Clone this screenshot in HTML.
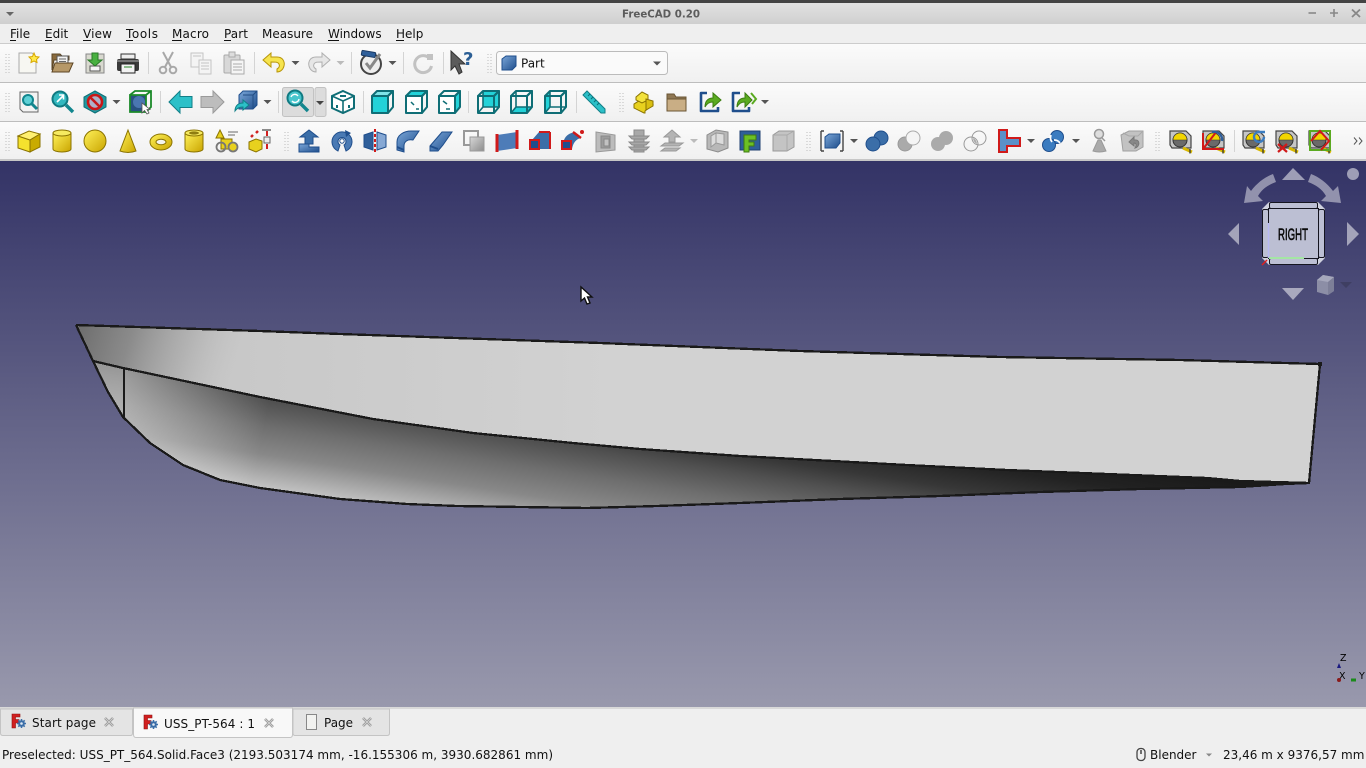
<!DOCTYPE html>
<html><head><meta charset="utf-8"><title>FreeCAD 0.20</title>
<style>html,body{margin:0;padding:0;width:1366px;height:768px;overflow:hidden;background:#efefef}svg{display:block}
text{font-family:"DejaVu Sans",sans-serif;font-size:12px;fill:#111}</style></head><body>
<svg width="1366" height="768" viewBox="0 0 1366 768" xmlns="http://www.w3.org/2000/svg">
<defs>
<linearGradient id="title" x1="0" y1="0" x2="0" y2="1"><stop offset="0" stop-color="#e2e2e2"/><stop offset="1" stop-color="#cfcfcf"/></linearGradient>
<linearGradient id="tb" x1="0" y1="0" x2="0" y2="1"><stop offset="0" stop-color="#fbfbfb"/><stop offset="1" stop-color="#f0f0f0"/></linearGradient>
<linearGradient id="vp" x1="0" y1="0" x2="0" y2="1"><stop offset="0" stop-color="#333366"/><stop offset="1" stop-color="#9999ad"/></linearGradient>
<linearGradient id="y" x1="0" y1="0" x2="1" y2="1"><stop offset="0" stop-color="#fff25a"/><stop offset="1" stop-color="#c9a400"/></linearGradient>
<linearGradient id="b" x1="0" y1="0" x2="1" y2="1"><stop offset="0" stop-color="#7aa6d8"/><stop offset="1" stop-color="#1f4e8c"/></linearGradient>
<linearGradient id="g" x1="0" y1="0" x2="1" y2="1"><stop offset="0" stop-color="#d8d8d8"/><stop offset="1" stop-color="#8c8c8c"/></linearGradient>
<linearGradient id="lower" gradientUnits="userSpaceOnUse" x1="-43.5" y1="282.6" x2="-70" y2="454.5">
<stop offset="0" stop-color="#191919"/><stop offset=".149" stop-color="#222"/><stop offset=".293" stop-color="#373737"/><stop offset=".397" stop-color="#505050"/><stop offset=".546" stop-color="#6e6e6e"/><stop offset=".707" stop-color="#888"/><stop offset=".902" stop-color="#c4c4c4"/><stop offset="1" stop-color="#cdcdcd"/></linearGradient>
<linearGradient id="upper" gradientUnits="userSpaceOnUse" x1="85" y1="325" x2="235" y2="375"><stop offset="0" stop-color="#6c6c6c" stop-opacity=".95"/><stop offset=".3" stop-color="#7c7c7c" stop-opacity=".8"/><stop offset=".65" stop-color="#999" stop-opacity=".45"/><stop offset="1" stop-color="#bbb" stop-opacity="0"/></linearGradient>
<linearGradient id="upper2" gradientUnits="userSpaceOnUse" x1="150" y1="0" x2="620" y2="0"><stop offset="0" stop-color="#c6c6c6"/><stop offset="1" stop-color="#d2d2d2"/></linearGradient>
<linearGradient id="bowov" gradientUnits="userSpaceOnUse" x1="124" y1="372" x2="270" y2="400"><stop offset="0" stop-color="#fff" stop-opacity=".45"/><stop offset="1" stop-color="#fff" stop-opacity="0"/></linearGradient>

<path id="dd" d="M-4-2H4L0 2Z" fill="#555"/>
<path id="ddg" d="M-4-2H4L0 2Z" fill="#bbb"/>
<g id="grip"><path d="M-2-9V10M1-9V10" stroke="#bdbdbd" stroke-dasharray="1 2" fill="none"/></g>
<path id="sep" d="M.5-11V11" stroke="#d4d4d4" fill="none"/>

<g id="box"><path d="M-10-6-5-11H11L6-6Z" fill="none" stroke="#0f6e76" stroke-width="2" stroke-linejoin="round"/><path d="M6-6 11-11V5L6 11ZM-10-6H6V11H-10Z" fill="none" stroke="#0f6e76" stroke-width="2" stroke-linejoin="round"/></g>
<path id="bk" d="M-5-11V5H11M-5 5-10 11" stroke="#0f6e76" stroke-width="1.600" fill="none"/>

<g id="tape"><path d="M-11-10H5L10-5V7H-9L-11 4Z" fill="#c6c6c6" stroke="#444" stroke-width="1.200"/><circle cx="-1" cy="-1" r="7" fill="#6a6a6a" stroke="#333"/><path d="M-8-1A7 7 0 0 1 6-1Z" fill="#f2d500" stroke="#333" stroke-width=".6"/><path d="M2 7 11 11" stroke="#d8b800" stroke-width="3"/><path d="M9 8V12.500" stroke="#333" stroke-width="1.300"/></g>
<g id="fc"><path d="M-7-8H1V-5H-3.500V-2.500H0V1H-3.500V6H-7Z" fill="#d11f1f" stroke="#8c1111" stroke-width=".6"/><path d="M2.500-3V6M-2 1.500H7M-.7-1.700 5.700 4.700M5.700-1.700-.7 4.700" stroke="#3b6ea8" stroke-width="1.500"/><circle cx="2.500" cy="1.500" r="3.300" fill="#3b6ea8"/><circle cx="2.500" cy="1.500" r="1.300" fill="#dfe8f2"/></g>
<g id="x"><path d="M-4-4 4 4M4-4-4 4" stroke="#9a9a9a" stroke-width="2.600"/><path d="M-4-4 4 4M4-4-4 4" stroke="#d8d8d8" stroke-width=".8"/></g>
</defs>

<!-- title bar -->
<rect width="1366" height="3" fill="#444"/>
<rect y="3" width="1366" height="21" fill="url(#title)"/>
<path d="M6 12H14L10 16Z" fill="#666"/>
<text x="622" y="17.500" textLength="78" lengthAdjust="spacingAndGlyphs" style="font-size:10.500px;font-weight:bold;fill:#5c5c5c">FreeCAD 0.20</text>
<path d="M1308.500 13H1316" stroke="#888" stroke-width="1.600"/><path d="M1330 13H1338M1334 9V17" stroke="#888" stroke-width="1.600"/><path d="M1352 9.500 1360 17M1360 9.500 1352 17" stroke="#888" stroke-width="1.800"/>

<!-- menu -->
<rect y="24" width="1366" height="19" fill="#efefef"/>
<text x="10" y="38">File</text><text x="45" y="38">Edit</text><text x="83" y="38" textLength="29">View</text><text x="126" y="38" textLength="32">Tools</text><text x="172" y="38" textLength="37">Macro</text><text x="224" y="38" textLength="24">Part</text><text x="262" y="38">Measure</text><text x="328" y="38">Windows</text><text x="396" y="38">Help</text>
<path d="M10 40.500h6M45 40.500h7M83 40.500h8M126 40.500h7M172 40.500h10M224 40.500h7M328 40.500h11M396 40.500h8" stroke="#111"/>

<!-- toolbars -->
<rect y="43" width="1366" height="1" fill="#ccc"/>
<rect y="44" width="1366" height="38" fill="url(#tb)"/><rect y="82" width="1366" height="1" fill="#bdbdbd"/>
<rect y="83" width="1366" height="38" fill="url(#tb)"/><rect y="121" width="1366" height="1" fill="#bdbdbd"/>
<rect y="122" width="1366" height="37" fill="url(#tb)"/><rect y="159" width="1366" height="2" fill="#c6c6c6"/>

<!-- row 1 -->
<use href="#grip" x="8" y="63"/>
<g transform="translate(29 63)"><path d="M-10-10H3L7-6V10H-10Z" fill="#f7f7f2" stroke="#aaa"/><path d="M5-10 6.500-6.500 10-6 7.500-3.500 8-.5 5-2 2-.5 2.500-3.500 0-6 3.500-6.500Z" fill="#ffe94a" stroke="#d8a800"/></g>
<g transform="translate(62 63)"><path d="M-10 7V-9H-2L0-7H7V-3H-8Z" fill="#8a6a3c" stroke="#5c4524"/><rect x="-5" y="-7" width="11" height="9" fill="#f2f2f2" stroke="#555"/><path d="M-3-4H4M-3-1.500H4" stroke="#666"/><path d="M-7 0H11L7 9H-10Z" fill="#b69868" stroke="#5c4524"/></g>
<g transform="translate(95 63)"><path d="M-9-9H9V10H-9Z" fill="#d9d9d0" stroke="#888"/><rect x="-5" y="3" width="10" height="5" fill="#f5f5f5" stroke="#555"/><path d="M-3-10H3V-3H7L0 3-7-3H-3Z" fill="#48b040" stroke="#2a7a2a"/></g>
<g transform="translate(128 63)"><rect x="-11" y="-4" width="22" height="12" rx="2" fill="#3a3a3a"/><rect x="-7" y="-9" width="14" height="5" fill="#eee" stroke="#333"/><path d="M-7 1H7V10H-7Z" fill="#f2f2f2" stroke="#222"/><path d="M-4 4 H4" stroke="#8bb98b" stroke-width="2"/><rect x="-11" y="-3" width="22" height="2" fill="#777"/></g>
<use href="#sep" x="148" y="63"/>
<g transform="translate(168 63)" fill="none" stroke="#a8a8a8" stroke-width="2"><path d="M-5-11 3 4M5-11-3 4"/><circle cx="-5" cy="7" r="3.300"/><circle cx="5" cy="7" r="3.300"/></g>
<g transform="translate(201 63)" stroke="#c4c4c4" fill="#f4f4f4"><rect x="-10" y="-10" width="12" height="14"/><rect x="-2" y="-3" width="12" height="14"/><path d="M0 0H8M0 3H8M0 6H8M-8-7H0" fill="none"/></g>
<g transform="translate(234 63)" stroke="#aaa"><rect x="-10" y="-8" width="16" height="18" rx="1" fill="#d8d8d8"/><rect x="-5" y="-11" width="6" height="5" fill="#ddd"/><rect x="-3" y="-3" width="13" height="14" fill="#f5f5f5"/><path d="M-1 1H8M-1 4H8M-1 7H8" fill="none"/></g>
<use href="#sep" x="254" y="63"/>
<g transform="translate(274 63)"><path d="M-11-3-3-10V-6H3C9-6 11-1 10 3 9 7 6 9 3 9V6C5 5 6 3 5 1 4-1 2-1-3-1V4Z" fill="#f6e44e" stroke="#b8960a"/></g>
<use href="#dd" x="295.500" y="63"/>
<g transform="translate(319 63)"><path d="M11-3 3-10V-6H-3C-9-6-11-1-10 3-9 7-6 9-3 9V6C-5 5-6 3-5 1-4-1-2-1 3-1V4Z" fill="#e6e6e6" stroke="#b0b0b0"/></g>
<use href="#ddg" x="340.500" y="63"/>
<use href="#sep" x="351" y="63"/>
<g transform="translate(371 63)"><circle cy="1" r="10" fill="#eee" stroke="#444" stroke-width="2"/><path d="M-5 0-1 5 9-9" fill="none" stroke="#888" stroke-width="3"/><rect x="-11" y="-11" width="14" height="5" rx="1" fill="#2f5f9a" stroke="#1b3a63" transform="rotate(10)"/></g>
<use href="#dd" x="392.500" y="63"/>
<use href="#sep" x="403" y="63"/>
<g transform="translate(423 63)"><path d="M7-4A8.500 8.500 0 1 0 8.500 3" fill="none" stroke="#c2c2c2" stroke-width="3"/><path d="M4-9H10V-3H4Z" fill="#c2c2c2"/></g>
<use href="#sep" x="443" y="63"/>
<g transform="translate(462 63)"><path d="M-11-12V7L-7 3-3 11 0 9-3 1H3Z" fill="#5c5c5c" stroke="#333"/><text x="1" y="2" style="font-size:18px;font-weight:bold;fill:#2c5f95">?</text></g>
<use href="#grip" x="490" y="63"/>
<rect x="496.500" y="51.500" width="171" height="23" rx="3" fill="#fafafa" stroke="#bbb"/>
<g transform="translate(509 63)"><path d="M-7-4-3-7H7V3L3 7H-7Z" fill="url(#b)" stroke="#1f4e8c"/></g>
<text x="521" y="67.500">Part</text><path d="M653 61.500H661L657 65.500Z" fill="#555"/>

<!-- row 2 -->
<use href="#grip" x="8" y="102"/>
<g transform="translate(29 102)"><path d="M-9-10H9V10H-6L-9 7Z" fill="#f3f3f3" stroke="#666"/><circle cx="-1" cy="-2" r="5" fill="#5dd0d6" stroke="#12868e" stroke-width="2"/><path d="M3 2 8 7" stroke="#12868e" stroke-width="3"/></g>
<g transform="translate(62 102)"><circle cx="-2" cy="-3" r="7.500" fill="#32b8bf" stroke="#107a82" stroke-width="2"/><path d="M-5 0 1-6M-3-7H1.500V-2.500" stroke="#fff" stroke-width="1.600" fill="none"/><path d="M4 3 11 10" stroke="#12868e" stroke-width="3.400"/></g>
<g transform="translate(95 102)"><path d="M0-11 11-5V5L0 11-11 5V-5Z" fill="#1f9aa1" stroke="#0f6e76"/><circle r="7" fill="#aeb2c8" stroke="#c81818" stroke-width="2.600"/><path d="M-5-5 5 5" stroke="#c81818" stroke-width="2.600"/></g>
<use href="#dd" x="116.500" y="102"/>
<g transform="translate(140 102)"><path d="M-10-7H6V10H-10Z" fill="#28517f" stroke="#1b8a2a" stroke-width="1.800"/><path d="M-10-7-5-11H11V5L6 10M6-7 11-11" fill="none" stroke="#1b8a2a" stroke-width="1.800"/><circle cx="-1" cy="0" r="6" fill="#4a76b0"/><path d="M2 1V11L4.500 8.500 7 12 9 11 7 7.500H10Z" fill="#fff" stroke="#555" stroke-width=".8"/></g>
<use href="#sep" x="160" y="102"/>
<path d="M169 102 180 91V96.500H192V107.500H180V113Z" fill="#2cc0c8" stroke="#117f87"/>
<path d="M224 102 213 91V96.500H201V107.500H213V113Z" fill="#bdbdbd" stroke="#9a9a9a"/>
<g transform="translate(246 102)"><path d="M-7-7-3-11H11V3L7 7H-7Z" fill="url(#b)" stroke="#1f4e8c"/><path d="M-3-7H7V7M7-7 11-11" fill="none" stroke="#234e84"/><path d="M-11 9C-11 3-7 1-3 1V-2L3 3-3 8V5C-6 5-9 6-11 9Z" fill="#2cc0c8" stroke="#117f87"/></g>
<use href="#dd" x="267.500" y="102"/>
<use href="#sep" x="278" y="102"/>
<rect x="282.500" y="87.500" width="31" height="29" rx="2" fill="#dcdcdc" stroke="#c2c2c2"/><rect x="315" y="87.500" width="11" height="29" rx="2" fill="#dcdcdc" stroke="#c2c2c2"/>
<path d="M316 101H324L320 105Z" fill="#444"/>
<g transform="translate(297 101)"><circle cx="-2" cy="-3" r="7.500" fill="#48c5cc" stroke="#107a82" stroke-width="2"/><path d="M-6-4A4 4 0 0 1 1-5M2-2A4 4 0 0 1-5 0" stroke="#fff" stroke-width="1.400" fill="none"/><path d="M4 3 11 10" stroke="#12868e" stroke-width="3.400"/></g>
<g transform="translate(343 102)"><path d="M0-11 11-6V6L0 11-11 6V-6Z" fill="#fff" stroke="#0f6e76" stroke-width="2"/><path d="M-11-6 0-1 11-6M0-1V11" stroke="#0f6e76" stroke-width="1.600" fill="none"/><path d="M-6 3V6M6 3V6M-3-6H3" stroke="#0f6e76" stroke-width="2"/></g>
<use href="#sep" x="363" y="102"/>
<g transform="translate(382 102)"><path d="M-10-6H6V11H-10Z" fill="#23d2d8"/><path d="M-10-6-5-11H11L6-6Z" fill="#7ee4e8"/><use href="#box"/></g>
<g transform="translate(416 102)"><path d="M-10-6-5-11H11L6-6Z" fill="#23d2d8"/><path d="M-10-6H6V11H-10Z" fill="#fff"/><use href="#box"/><path d="M-5 0-2 3M0 7H3" stroke="#0f6e76" stroke-width="1.500"/></g>
<g transform="translate(449 102)"><path d="M6-6 11-11V5L6 11Z" fill="#23d2d8"/><path d="M-10-6H6V11H-10Z" fill="#fff"/><use href="#box"/><path d="M-6-1-2 2M-3 7H1" stroke="#0f6e76" stroke-width="1.500"/></g>
<use href="#sep" x="468" y="102"/>
<g transform="translate(488 102)"><path d="M-5-11H11V5H-5Z" fill="#23d2d8"/><use href="#box"/><use href="#bk"/></g>
<g transform="translate(521 102)"><path d="M-10 11-5 5H11L6 11Z" fill="#23d2d8"/><use href="#box"/><use href="#bk"/></g>
<g transform="translate(555 102)"><path d="M-10-6-5-11V5L-10 11Z" fill="#23d2d8"/><use href="#box"/><use href="#bk"/></g>
<use href="#sep" x="576" y="102"/>
<g transform="translate(594 102)"><path d="M-11-7-7-11 11 7V11L7 11Z" fill="#2cc0c8" stroke="#117f87"/><path d="M-6-6-4-8M-3-3-1-5M0 0 2-2M3 3 5 1" stroke="#0f6e76"/></g>
<use href="#grip" x="622" y="102"/>
<g transform="translate(644 102)" stroke="#8a7300"><path d="M-10 2-2-3 9 3 1 9V11H0L-10 6Z" fill="#e8d11e"/><path d="M-8-5-2-10 4-7V-2L-2 1-8-2Z" fill="#f3e23c"/><path d="M2-3 9-1V4L2 8Z" fill="#d9bf12"/></g>
<g transform="translate(677 102)"><path d="M-10-8H-3L-1-5H9V9H-10Z" fill="#8f7753" stroke="#6a5534"/><path d="M-10-3H9V9H-10Z" fill="#c9ae85" stroke="#6a5534"/></g>
<g transform="translate(710 102)"><path d="M-3-9H-9V9H8V5" fill="none" stroke="#1f4e8c" stroke-width="2.600" stroke-linejoin="round"/><path d="M-5 5C-5-2-1-4 3-4V-9L11-2 3 5V0C0 0-3 1-5 5Z" fill="#5aaa20" stroke="#3c7d10"/></g>
<g transform="translate(743 102)"><path d="M-3-9H-10V9H6V5" fill="none" stroke="#1f4e8c" stroke-width="2.600" stroke-linejoin="round"/><path d="M-6 5C-6-2-2-4 2-4V-9L9-2 2 5V0C-1 0-4 1-6 5Z" fill="#5aaa20" stroke="#3c7d10"/><path d="M8-9 13-3 9 2" fill="none" stroke="#5aaa20" stroke-width="2"/></g>
<use href="#dd" x="765" y="102"/>

<!-- row 3 -->
<use href="#grip" x="8" y="141"/>
<g transform="translate(29 141)" stroke="#8a7300"><path d="M-11-5 1-1V11L-11 7Z" fill="#f4e22e"/><path d="M-11-5 0-10 11-7 1-1Z" fill="#fff070"/><path d="M1-1 11-7V6L1 11Z" fill="#c9ab00"/></g>
<g transform="translate(62 141)"><path d="M-9-8V8A9 3 0 0 0 9 8V-8Z" fill="url(#y)" stroke="#8a7300"/><ellipse cy="-8" rx="9" ry="3" fill="#f6ea60" stroke="#8a7300"/></g>
<circle cx="95" cy="141" r="11" fill="url(#y)" stroke="#8a7300"/>
<path d="M128 130 136 151Q128 154 120 151Z" fill="url(#y)" stroke="#8a7300"/>
<g transform="translate(161 142)"><ellipse rx="11" ry="8" fill="url(#y)" stroke="#8a7300"/><ellipse rx="5" ry="2.800" fill="#f5f5f0" stroke="#8a7300"/></g>
<g transform="translate(194 141)"><path d="M-9-8V8A9 3 0 0 0 9 8V-8Z" fill="url(#y)" stroke="#8a7300"/><ellipse cy="-8" rx="9" ry="3" fill="#f6ea60" stroke="#8a7300"/><ellipse cy="-8" rx="5" ry="1.600" fill="#8f7d10"/></g>
<g transform="translate(227 141)"><path d="M-7-11-3-3H-11Z" fill="#e8d11e" stroke="#8a7300"/><path d="M1-9H11M1-6H8" stroke="#999" stroke-width="1.500"/><rect x="-6" y="-2" width="11" height="10" fill="#e8d11e" stroke="#8a7300"/><circle cx="-6" cy="6" r="4.500" fill="none" stroke="#777" stroke-width="1.800"/><circle cx="6" cy="6" r="4.500" fill="#e8d11e" stroke="#777" stroke-width="1.800"/></g>
<g transform="translate(260 141)"><path d="M-11 1-4-2 2 0V8L-4 11-11 8Z" fill="#e8d11e" stroke="#8a7300"/><rect x="4" y="-4" width="6" height="6" fill="#eee" stroke="#666"/><path d="M2-11H11" stroke="#666" stroke-width="1.500"/><path d="M7-10V-5" stroke="#d11f1f" stroke-width="2"/><path d="M-9-4-7-6M-4-8-2-10" stroke="#d11f1f" stroke-width="2.500"/><path d="M7 3V8" stroke="#d11f1f" stroke-width="2"/></g>
<use href="#grip" x="287" y="141"/>
<g transform="translate(309 141)"><path d="M-10 3H0V6H10V11H-10Z" fill="url(#b)" stroke="#1f4e8c"/><path d="M-4 3H4V-4H9L0-11-9-4H-4Z" fill="#3b6ea8" stroke="#1f4e8c"/></g>
<g transform="translate(342 141)"><path d="M-4 10A10 10 0 1 1 4 10L2 4A4 4 0 1 0-2 4Z" fill="#4a7ab4" stroke="#1f4e8c"/><path d="M4 5 -4 5" stroke="#1f4e8c" opacity="0"/><circle r="2.200" fill="#fff" stroke="#1f4e8c"/><path d="M3-11 9-8 4-4Z" fill="#1f4e8c"/></g>
<g transform="translate(375 141)"><path d="M-11-6-2-9V9L-11 6Z" fill="#2f5f9a" stroke="#1f4e8c"/><path d="M11-6 2-9V9L11 6Z" fill="#86a8d4" stroke="#1f4e8c"/><path d="M0-12V12" stroke="#d01a1a" stroke-width="2" stroke-dasharray="3 2"/></g>
<g transform="translate(408 141)"><path d="M-11 9V1C-11-6-4-10 3-10H11L5-1C-1-2-4 1-4 5V11Z" fill="url(#b)" stroke="#1f4e8c"/><path d="M-11 6-4 9" stroke="#1f4e8c" stroke-width="2"/></g>
<g transform="translate(441 141)"><path d="M-11 5 1-9 11-9 2 4-3 10H-11Z" fill="url(#b)" stroke="#1f4e8c"/><path d="M-11 5-3 8" stroke="#1f4e8c" stroke-width="2"/></g>
<g transform="translate(474 141)"><rect x="-10" y="-10" width="14" height="14" fill="none" stroke="#999" stroke-width="2"/><rect x="-4" y="-4" width="14" height="14" fill="url(#g)" stroke="#999"/></g>
<g transform="translate(507 141)"><path d="M-10-6 10-9V7L-10 10Z" fill="#4d7cb8"/><path d="M-10-7V11M10-11V8" stroke="#d01a1a" stroke-width="3"/></g>
<g transform="translate(540 141)"><path d="M-8-1-1-9H10V8H-1Z" fill="#3b6ea8"/><path d="M10-9V8" stroke="#d01a1a" stroke-width="2"/><path d="M-1-9H10" stroke="#d01a1a" stroke-width="2"/><rect x="-10" y="-1" width="9" height="9" fill="#1f4e8c" stroke="#d01a1a" stroke-width="2"/></g>
<g transform="translate(573 141)"><path d="M-9-1C-7-6-3-8 2-9L8-3C3-2 0 2-1 8H-7Z" fill="#3b6ea8"/><path d="M0-9 8-3" stroke="#d01a1a" stroke-width="2.400"/><rect x="-11" y="0" width="9" height="8" fill="#1f4e8c" stroke="#d01a1a" stroke-width="2"/><circle cx="9" cy="-9" r="2" fill="#d01a1a"/></g>
<g transform="translate(606 141)"><path d="M-10-9 9-6V9L-10 11Z" fill="#bcbcbc" stroke="#999"/><rect x="-5" y="-5" width="9" height="12" fill="#9c9c9c" stroke="#888"/><rect x="-2" y="-2" width="5" height="7" fill="#c2c2c2" stroke="#888"/></g>
<g transform="translate(639 141)" stroke="#8a8a8a" fill="#a8a8a8"><rect x="-5" y="-11" width="10" height="22"/><path d="M-10-5H10L7-2H-7ZM-10 1H10L7 4H-7ZM-10 6H10L7 9H-7Z"/></g>
<g transform="translate(672 141)" fill="#b4b4b4" stroke="#999"><path d="M0-11 8-4H3V1H-3V-4H-8Z"/><path d="M-7 2H11L7 5H-11ZM-7 7H8L4 10H-11Z"/></g>
<use href="#ddg" x="694" y="141"/>
<g transform="translate(717 141)"><path d="M-10-6-1-11 11-9V7L1 11-10 8Z" fill="#b8b8b8" stroke="#8c8c8c"/><path d="M-6-5-1-8V2L-6 6ZM-1-8 7-7V4L-1 2Z" fill="#dcdcdc" stroke="#999"/></g>
<g transform="translate(750 141)"><path d="M-10-10H10V9H-10Z" fill="#2f5f9a" stroke="#1f3f70"/><path d="M-6-6H6V-1H-1V1H4V5H-1V11H-6Z" fill="#6cc024" stroke="#3f7a10"/></g>
<g transform="translate(783 141)"><path d="M-10-6-4-10H11V6L4 10H-10Z" fill="#c4c4c4" stroke="#999"/><path d="M-10-6H4V10M4-6 11-10" fill="none" stroke="#aaa"/></g>
<use href="#grip" x="809" y="141"/>
<g transform="translate(832 141)"><path d="M-11-10V10M-11-10H-8M-11 10H-8M11-10V10M11-10H8M11 10H8" fill="none" stroke="#444" stroke-width="1.400"/><path d="M-7-4-3-7H8V2L4 7H-7Z" fill="url(#b)" stroke="#1f4e8c"/></g>
<use href="#dd" x="854" y="141"/>
<g transform="translate(877 141)"><circle cx="4" cy="-3" r="7" fill="#3b6ea8" stroke="#1f4e8c"/><circle cx="-4" cy="3" r="7" fill="#3b6ea8" stroke="#1f4e8c"/></g>
<g transform="translate(909 141)"><circle cx="-4" cy="3" r="7" fill="#aaa" stroke="#999"/><circle cx="4" cy="-3" r="7" fill="#f4f4f4" stroke="#aaa"/></g>
<g transform="translate(942 141)"><circle cx="4" cy="-3" r="7" fill="#aaa"/><circle cx="-4" cy="3" r="7" fill="#aaa"/></g>
<g transform="translate(975 141)"><circle cx="4" cy="-3" r="7" fill="none" stroke="#999"/><circle cx="-4" cy="3" r="7" fill="none" stroke="#999"/><path d="M-2-3A7 7 0 0 1 2 3 7 7 0 0 1-2-3Z" fill="#aaa"/></g>
<g transform="translate(1009 141)"><path d="M-10-11H-2V-3H11V5H-2V11H-10Z" fill="#5a90c8" stroke="#d01a1a" stroke-width="2"/></g>
<use href="#dd" x="1031" y="141"/>
<g transform="translate(1053 141)"><circle cx="4" cy="-4" r="6.500" fill="#3b7cc0" stroke="#1f4e8c"/><circle cx="-4" cy="4" r="6.500" fill="#3b7cc0" stroke="#1f4e8c"/><path d="M-2-6A7 7 0 0 0 -1 1M7 2A7 7 0 0 0 1-1" stroke="#fff" stroke-width="1.800" fill="none"/></g>
<use href="#dd" x="1076" y="141"/>
<g transform="translate(1099 141)"><path d="M-6 10 -1-1H2L7 10Q0 12-6 10Z" fill="#aaa" stroke="#999"/><circle cy="-7" r="4.500" fill="#ddd" stroke="#999" stroke-width="1.500"/><path d="M3-3 6 0" stroke="#999" stroke-width="1.500"/></g>
<g transform="translate(1132 141)"><path d="M-11-6-3-10H11V6L4 10H-9Z" fill="#c2c2c2" stroke="#a0a0a0"/><path d="M-3-5 6-5M6-5 10-9M-3-5-9-8" stroke="#a8a8a8" fill="none"/><path d="M-3 1 2-4V-1H4C8-1 8 6 3 7 5 4 4 2 2 2V5Z" fill="#888" stroke="#777"/></g>
<use href="#grip" x="1158" y="141"/>
<use href="#tape" x="1181" y="141"/>
<g transform="translate(1214 141)"><use href="#tape"/><path d="M-11-8V8H10" fill="none" stroke="#d01a1a" stroke-width="2"/><path d="M-11 8 3-10" stroke="#d01a1a" stroke-width="2"/><path d="M-2-9A8 8 0 0 1 8 0" stroke="#2f5f9a" stroke-width="2.400" fill="none"/></g>
<use href="#sep" x="1234" y="141"/>
<g transform="translate(1254 141)"><use href="#tape"/><path d="M10-4A5 5 0 1 1 6-9H11" stroke="#3b7cc0" stroke-width="2.400" fill="none"/></g>
<g transform="translate(1287 141)"><use href="#tape"/><path d="M-9 3 0 11M0 3-9 11" stroke="#d01a1a" stroke-width="2.200"/></g>
<g transform="translate(1320 141)"><use href="#tape"/><rect x="-10" y="-10" width="20" height="19" fill="none" stroke="#5aaa20" stroke-width="2"/><path d="M-9 0 0-10 9 0 1 9" fill="none" stroke="#d01a1a" stroke-width="2"/></g>
<path d="M1354 137.500 1357 141 1354 144.500M1359 137.500 1362 141 1359 144.500" fill="none" stroke="#555"/>

<!-- viewport -->
<rect y="161" width="1366" height="547" fill="url(#vp)"/>

<!-- hull -->
<path d="M76 325 260 331 340 334 600 343 800 351 1000 357 1180 360 1320 364 1309 483 1285 483 1240 481 1207 478 1107 474 1007 470 907 465 740 456 640 449 573 443 473 433 373 419 260 397 123 368 93 361Z" fill="url(#upper2)"/>
<path d="M76 325 260 331 260 397 123 368 93 361Z" fill="url(#upper)"/>
<path d="M93 361 123 368 260 397 373 419 473 433 573 443 640 449 740 456 907 465 1007 470 1107 474 1207 478 1240 481 1285 483 1240 487 1140 489 1040 492 940 496 840 499 740 503 657 506 587 508 457 506 407 504 340 499 260 488 220 480 183 465 150 443 123 417 108 392Z" fill="url(#lower)"/>
<path d="M93 361 123 368 260 397 300 405 300 493 260 488 220 480 183 465 150 443 123 417 108 392Z" fill="url(#bowov)"/>
<g fill="none" stroke="#1a1a1a" stroke-width="2.300" shape-rendering="crispEdges">
<path d="M76 325 260 331 340 334 600 343 800 351 1000 357 1180 360 1320 364 1309 483 1285 484 1240 487 1140 489 1040 492 940 496 840 499 740 503 657 506 587 508 457 506 407 504 340 499 260 488 220 480 183 465 150 443 123 417 108 392 93 361 76 325"/>
<path d="M93 361 123 368 260 397 373 419 473 433 573 443 640 449 740 456 907 465 1007 470 1107 474 1207 478 1240 481 1309 483"/>
<path d="M124 368V417"/>
</g>
<path d="M1240 481 1285 483 1240 487Z" fill="#1a1a1a"/>
<rect x="1318" y="362" width="4" height="4" fill="#1a1a1a"/>

<!-- cursor -->
<path d="M581 287V301L584.500 298 587 304 590 303 587.500 297H592Z" fill="#fff" stroke="#111" stroke-width="1.400"/>

<!-- navicube -->
<g fill="#fff" fill-opacity=".52">
<path d="M1282 180H1305L1293 168Z"/><path d="M1228 234 1239 223V245Z"/><path d="M1347 222V246L1359 234Z"/><path d="M1282 288H1304L1293 300Z"/>
<circle cx="1353" cy="174" r="6"/>
<path d="M1273 174 1276 182C1268 185 1262 189 1258 196L1263 201 1244 203 1247 186 1251 191C1257 183 1265 177 1273 174Z" fill-opacity=".45"/>
<path d="M1311 174 1308 182C1316 185 1322 189 1326 196L1321 201 1341 203 1338 186 1333 191C1327 183 1319 177 1311 174Z" fill-opacity=".45"/>
</g>
<g transform="translate(1326 285)"><path d="M-9-5-3-10 8-8V6L2 10-9 7Z" fill="#8c8ea6"/><path d="M-9-5 2-3 8-8-3-10Z" fill="#a6a8bc"/><path d="M2-3V10L8 6V-8Z" fill="#7d7f98"/></g>
<path d="M1340 282H1352L1346 288Z" fill="#3f3f62"/>
<path d="M1269 202H1318L1325 209V258L1318 265H1269L1262 258V209Z" fill="#cfd1de"/>
<g stroke="#151520" stroke-width="1" fill="#bcbfd3">
<rect x="1269.500" y="202.500" width="48" height="6" rx="1.500"/><rect x="1269.500" y="258.500" width="48" height="6" rx="1.500"/>
<rect x="1262.500" y="209.500" width="6" height="48" rx="1.500"/><rect x="1318.500" y="209.500" width="6" height="48" rx="1.500"/>
<rect x="1268.500" y="208.500" width="50" height="50"/>
</g>
<path d="M1268.500 223V258" stroke="#b8b8f5" stroke-width="1.500"/>
<path d="M1269 258H1304" stroke="#a4e6a4" stroke-width="2"/>
<path d="M1262 265 1267 260" stroke="#e02020" stroke-width="1.500"/>
<text x="1278" y="240" textLength="30" lengthAdjust="spacingAndGlyphs" style="font-family:'Liberation Sans',sans-serif;font-size:16.500px;fill:#0a0a0a;stroke:#0a0a0a;stroke-width:.6">RIGHT</text>

<!-- axes -->
<text x="1340" y="661" style="font-size:9.500px;fill:#000">Z</text>
<text x="1339" y="679" style="font-size:9.500px;fill:#000">X</text>
<text x="1359" y="679" style="font-size:9.500px;fill:#000">Y</text>
<path d="M1339 663 1337 668H1341Z" fill="#1a1a80"/>
<circle cx="1339" cy="680" r="2" fill="#8a1a1a"/>
<rect x="1351" y="678.500" width="5" height="3" fill="#1a8a1a"/>

<!-- tabs -->
<rect y="708" width="1366" height="60" fill="#efefef"/>
<rect y="707" width="1366" height="2" fill="#d9d9d9"/>
<path d="M.5 709V733Q.5 735.500 3 735.500H130.500Q132.500 735.500 132.500 733V709Z" fill="#e4e4e4" stroke="#c4c4c4"/>
<path d="M293 709V733Q293 735.500 295 735.500H387Q389.500 735.500 389.500 733V709Z" fill="#e4e4e4" stroke="#c4c4c4"/>
<path d="M133.500 708V734.500Q133.500 737.500 136 737.500H290Q292.500 737.500 292.500 734.500V708Z" fill="#f8f8f8" stroke="#c4c4c4"/>
<use href="#fc" x="19" y="722"/>
<text x="32" y="727" textLength="64">Start page</text>
<use href="#x" x="109" y="722"/>
<use href="#fc" x="151" y="723"/>
<text x="164" y="728" textLength="91">USS_PT-564 : 1</text>
<use href="#x" x="269" y="723"/>
<rect x="306.500" y="714.500" width="10" height="15" fill="#f2f2f0" stroke="#888"/>
<text x="324" y="727">Page</text>
<use href="#x" x="367" y="722"/>

<!-- status -->
<text x="2" y="759" textLength="551">Preselected: USS_PT_564.Solid.Face3 (2193.503174 mm, -16.155306 m, 3930.682861 mm)</text>
<rect x="1137" y="748.500" width="8" height="12" rx="3.500" fill="none" stroke="#444" stroke-width="1.300"/><path d="M1141 750V754" stroke="#444" stroke-width="1.500"/>
<text x="1150" y="759">Blender</text>
<path d="M1206 753.500H1212L1209 756.500Z" fill="#888"/>
<text x="1223" y="759">23,46 m x 9376,57 mm</text>
</svg>
</body></html>
